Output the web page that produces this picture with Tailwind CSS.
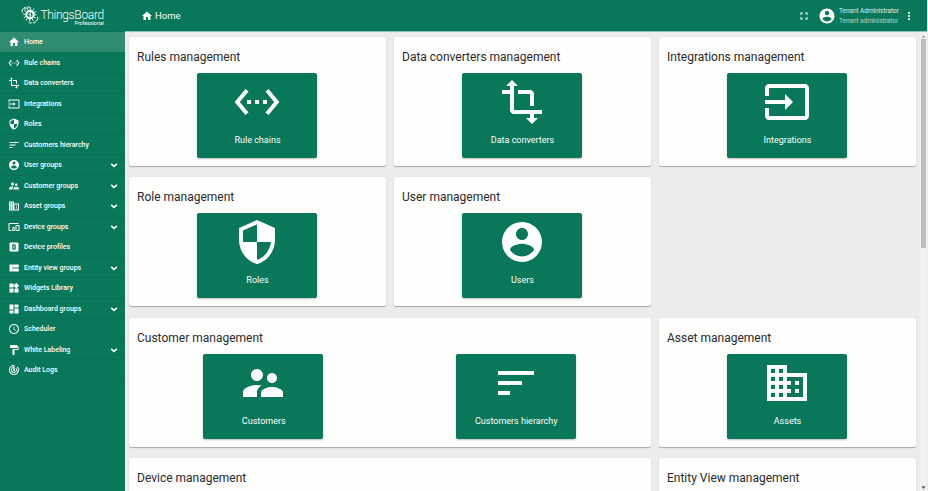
<!DOCTYPE html>
<html lang="en">
<head>
<meta charset="utf-8">
<title>ThingsBoard | Home</title>
<script src="https://cdn.jsdelivr.net/npm/@tailwindcss/browser@4"></script>
</head>
<body class="h-[491px] w-[928px] overflow-hidden bg-[#ececeb] font-['Roboto',sans-serif]">
<svg class="hidden">
  <symbol id="home" viewBox="0 0 24 24"><path d="M10 20v-6h4v6h5v-8h3L12 3 2 12h3v8z"/></symbol>
  <symbol id="rules" viewBox="0 0 24 24"><path d="M7.77 6.76L6.23 5.48.82 12l5.41 6.52 1.54-1.28L3.42 12l4.35-5.24zM7 13h2v-2H7v2zm10-2h-2v2h2v-2zm-6 2h2v-2h-2v2zm6.77-7.52l-1.54 1.28L20.58 12l-4.35 5.24 1.54 1.28L23.18 12l-5.41-6.52z"/></symbol>
  <symbol id="transform" viewBox="0 0 24 24"><path d="M22 18v-2H8V4h2L7 1 4 4h2v2H2v2h4v8c0 1.1.9 2 2 2h8v2h-2l3 3 3-3h-2v-2h4zM10 8h6v6h2V8c0-1.1-.9-2-2-2h-6v2z"/></symbol>
  <symbol id="input" viewBox="0 0 24 24"><path d="M21 3.01H3c-1.1 0-2 .9-2 2V9h2V4.99h18v14.03H3V15H1v4.01c0 1.1.9 1.98 2 1.98h18c1.1 0 2-.88 2-1.98v-14c0-1.11-.9-2-2-2zM11 16l4-4-4-4v3H1v2h10v3z"/></symbol>
  <symbol id="security" viewBox="0 0 24 24"><path d="M12 1L3 5v6c0 5.55 3.84 10.74 9 12 5.16-1.26 9-6.45 9-12V5l-9-4zm0 10.99h7c-.53 4.12-3.28 7.79-7 8.94V12H5V6.3l7-3.11v8.8z"/></symbol>
  <symbol id="account" viewBox="0 0 24 24"><path d="M12 2C6.48 2 2 6.48 2 12s4.48 10 10 10 10-4.48 10-10S17.52 2 12 2zm0 3c1.66 0 3 1.34 3 3s-1.34 3-3 3-3-1.34-3-3 1.34-3 3-3zm0 14.2c-2.5 0-4.71-1.28-6-3.22.03-1.99 4-3.08 6-3.08 1.99 0 5.97 1.09 6 3.08-1.29 1.94-3.5 3.22-6 3.22z"/></symbol>
  <symbol id="people" viewBox="0 0 24 24"><path d="M16.5 12c1.38 0 2.49-1.12 2.49-2.5S17.88 7 16.5 7C15.12 7 14 8.12 14 9.5s1.12 2.5 2.5 2.5zM9 11c1.66 0 2.99-1.34 2.99-3S10.66 5 9 5C7.34 5 6 6.34 6 8s1.34 3 3 3zm7.5 3c-1.83 0-5.5.92-5.5 2.75V19h11v-2.25c0-1.83-3.67-2.75-5.5-2.75zM9 13c-2.33 0-7 1.17-7 3.5V19h7v-2.25c0-.85.33-2.34 2.37-3.47C10.5 13.1 9.66 13 9 13z"/></symbol>
  <symbol id="sort" viewBox="0 0 24 24"><path d="M3 18h6v-2H3v2zM3 6v2h18V6H3zm0 7h12v-2H3v2z"/></symbol>
  <symbol id="domain" viewBox="0 0 24 24"><path d="M12 7V3H2v18h20V7H12zM6 19H4v-2h2v2zm0-4H4v-2h2v2zm0-4H4V9h2v2zm0-4H4V5h2v2zm4 12H8v-2h2v2zm0-4H8v-2h2v2zm0-4H8V9h2v2zm0-4H8V5h2v2zm10 12h-8v-2h2v-2h-2v-2h2v-2h-2V9h8v10zm-2-8h-2v2h2v-2zm0 4h-2v2h2v-2z"/></symbol>
  <symbol id="devices" viewBox="0 0 24 24"><path d="M3 6h18V4H3c-1.1 0-2 .9-2 2v12c0 1.1.9 2 2 2h4v-2H3V6zm10 6H9v1.78c-.61.55-1 1.33-1 2.22s.39 1.67 1 2.22V20h4v-1.78c.61-.55 1-1.34 1-2.22s-.39-1.67-1-2.22V12zm-2 5.5c-.83 0-1.5-.67-1.5-1.5s.67-1.5 1.5-1.5 1.5.67 1.5 1.5-.67 1.5-1.5 1.5zM22 8h-6c-.5 0-1 .5-1 1v10c0 .5.5 1 1 1h6c.5 0 1-.5 1-1V9c0-.5-.5-1-1-1zm-1 10h-4v-8h4v8z"/></symbol>
  <symbol id="profile" viewBox="0 0 24 24"><path fill-rule="evenodd" d="M5 3h14a2 2 0 0 1 2 2v14a2 2 0 0 1-2 2H5a2 2 0 0 1-2-2V5a2 2 0 0 1 2-2zM8.500 6.500v11h4.500a2.500 2.500 0 0 0 2.500-2.500V9a2.500 2.500 0 0 0-2.500-2.500zM11 9h2v6h-2z"/></symbol>
  <symbol id="quilt" viewBox="0 0 24 24"><path d="M3 5h6.500v14H3zM10 5h11.500v6H10zM10 13h11.500v6H10z"/></symbol>
  <symbol id="widgets" viewBox="0 0 24 24"><path d="M13 13v8h8v-8h-8zM3 21h8v-8H3v8zM3 3v8h8V3H3zm13.66-1.31L11 7.34 16.66 13l5.66-5.66-5.66-5.65z"/></symbol>
  <symbol id="dashboard" viewBox="0 0 24 24"><path d="M3 13h8V3H3v10zm0 8h8v-6H3v6zm10 0h8V11h-8v10zm0-18v6h8V3h-8z"/></symbol>
  <symbol id="schedule" viewBox="0 0 24 24"><path d="M11.99 2C6.47 2 2 6.48 2 12s4.47 10 9.99 10C17.52 22 22 17.52 22 12S17.52 2 11.99 2zM12 20c-4.42 0-8-3.58-8-8s3.58-8 8-8 8 3.58 8 8-3.58 8-8 8zm.5-13H11v6l5.25 3.15.75-1.23-4.5-2.67z"/></symbol>
  <symbol id="paint" viewBox="0 0 24 24"><path d="M18 4V3c0-.55-.45-1-1-1H5c-.55 0-1 .45-1 1v4c0 .55.45 1 1 1h12c.55 0 1-.45 1-1V6h1v4H9v11c0 .55.45 1 1 1h2c.55 0 1-.45 1-1v-9h8V4h-3z"/></symbol>
  <symbol id="audit" viewBox="0 0 24 24"><path d="M19.07 4.93l-1.41 1.41C19.1 7.79 20 9.79 20 12c0 4.42-3.58 8-8 8s-8-3.58-8-8c0-4.08 3.05-7.44 7-7.93v2.02C8.16 6.57 6 9.03 6 12c0 3.31 2.69 6 6 6s6-2.69 6-6c0-1.66-.67-3.16-1.76-4.24l-1.41 1.41C15.55 9.9 16 10.9 16 12c0 2.21-1.79 4-4 4s-4-1.79-4-4c0-1.86 1.28-3.41 3-3.86v2.14c-.6.35-1 .98-1 1.72 0 1.1.9 2 2 2s2-.9 2-2c0-.74-.4-1.38-1-1.72V2h-1C6.48 2 2 6.48 2 12s4.48 10 10 10 10-4.48 10-10c0-2.76-1.12-5.26-2.93-7.07z"/></symbol>
</svg>

<div class="flex h-full w-[927px]">
  <aside class="flex w-[125px] shrink-0 flex-col bg-[#08775a] text-white">
    <div class="flex h-8 shrink-0 items-start border-b border-[#076f53] pl-[21px]">
      <svg class="mt-[5px] h-5 w-[18px] shrink-0" viewBox="0 0 18 20" fill="none" stroke="#fff" stroke-linecap="round">
        <circle cx="9" cy="9.6" r="3.7" stroke-width="2.2"/>
        <path d="M9.6 7.4 8 9.8h2l-1.5 2.4" stroke-width="1"/>
        <path d="M4.6 6.3 3.2 5M6.8 4.8 6.4 3.4M9.4 4.4V3M12 5.2l.9-1.3M13.4 7.3l1.5-.6M13.7 9.8h1.6M13.2 12.2l1.3.8M11.3 14l.7 1.4M8.6 14.7v1.4M6 13.9l-.9 1.3M4.5 11.9l-1.4.7M4 9.2H2.5" stroke-width=".9"/>
        <path d="M1.2 7.2C.8 5.600 1.200 4 2.300 3.600M3.500 2.400a1 1 0 1 0 1.500-.3M6.500 2c1.200-.3 2.300 0 3 .8M16.800 12.300c.3 1.600-.1 3.200-1.600 3.300M14.200 16.600c.3 1.200-.8 1.800-1.800 1.300M10.800 17.800c-1 .5-2 .2-2.800-.2" stroke-width="1"/>
      </svg>
      <div class="flex w-[65px] flex-col items-end pt-[9px]">
        <span class="text-[12px] leading-[12px] font-light tracking-[-0.3px] whitespace-nowrap">ThingsBoard</span>
        <span class="text-[5.3px] leading-[5px] whitespace-nowrap">Professional</span>
      </div>
    </div>
    <nav id="menu" class="flex flex-col"></nav>
  </aside>

  <div class="flex min-w-0 flex-1 flex-col">
    <header class="flex h-8 shrink-0 items-center border-b border-[#8fc0b1] bg-[#08775a] pl-4 text-white">
      <svg class="h-3 w-3 fill-current"><use href="#home"/></svg>
      <span class="ml-[2px] pt-px text-[9.5px] leading-3">Home</span>
      <svg class="ml-auto h-3 w-3 fill-current" viewBox="0 0 24 24"><path d="M7 14H5v5h5v-2H7v-3zm-2-4h2V7h3V5H5v5zm12 7h-3v2h5v-5h-2v3zM14 5v2h3v3h2V5h-5z"/></svg>
      <svg class="ml-2 h-[18px] w-[18px] fill-current"><use href="#account"/></svg>
      <div class="ml-[3.5px] flex w-[64px] flex-col text-[6.4px] leading-[10px] whitespace-nowrap">
        <span class="text-white/85">Tenant Administrator</span>
        <span class="text-white/65">Tenant administrator</span>
      </div>
      <svg class="mr-3 h-3 w-3 fill-current" viewBox="0 0 24 24"><path d="M12 8c1.100 0 2-.9 2-2s-.9-2-2-2-2 .9-2 2 .9 2 2 2zm0 2c-1.100 0-2 .9-2 2s.9 2 2 2 2-.9 2-2-.9-2-2-2zm0 6c-1.100 0-2 .9-2 2s.9 2 2 2 2-.9 2-2-.9-2-2-2z"/></svg>
    </header>
    <div class="flex min-h-0 flex-1">
      <main id="cards" class="grid flex-1 auto-rows-[129px] grid-cols-3 gap-x-2 gap-y-[11.4px] overflow-hidden pt-[5px] pr-1 pl-1"></main>
      <div class="flex w-[7px] flex-col items-center bg-[#f1f1f0] pt-[2px] pb-[1px]">
        <svg class="h-[5px] w-[5px] fill-[#a0a0a0]" viewBox="0 0 5 5"><path d="M.7 3.700 2.500 1l1.800 2.700z"/></svg>
        <div class="h-[209px] w-[5px] bg-[#bdbdbd]"></div>
        <svg class="mt-auto h-[5px] w-[5px] fill-[#505050]" viewBox="0 0 5 5"><path d="M.5 1.300h4L2.500 4z"/></svg>
      </div>
    </div>
  </div>
</div>

<script>
const menu = [
  ['home', 'Home'], ['rules', 'Rule chains'], ['transform', 'Data converters'], ['input', 'Integrations'],
  ['security', 'Roles'], ['sort', 'Customers hierarchy'], ['account', 'User groups', 1], ['people', 'Customer groups', 1],
  ['domain', 'Asset groups', 1], ['devices', 'Device groups', 1], ['profile', 'Device profiles'],
  ['quilt', 'Entity view groups', 1], ['widgets', 'Widgets Library'], ['dashboard', 'Dashboard groups', 1],
  ['schedule', 'Scheduler'], ['paint', 'White Labeling', 1], ['audit', 'Audit Logs']
];
document.getElementById('menu').innerHTML = menu.map(([icon, label, open], i) => `
  <a class="flex h-[20.5px] items-center border-b border-[#076f53] pt-[0.6px] pl-2 pr-[7px] ${i ? '' : 'bg-[#2f8b72]'}">
    <svg class="h-3 w-3 fill-current"><use href="#${icon}"/></svg>
    <span class="ml-1 text-[7px] leading-[10px] font-medium whitespace-nowrap">${label}</span>
    ${open ? '<svg class="ml-auto h-2 w-2" viewBox="0 0 8 8" fill="none" stroke="#fff" stroke-width="1.6"><path d="M1.200 2.800 4 5.500l2.800-2.700"/></svg>' : ''}
  </a>`).join('');

const cards = [
  ['Rules management', '', [['rules', 'Rule chains']]],
  ['Data converters management', '', [['transform', 'Data converters']]],
  ['Integrations management', '', [['input', 'Integrations']]],
  ['Role management', '', [['security', 'Roles']]],
  ['User management', '', [['account', 'Users']]],
  ['Customer management', 'col-span-2 col-start-1', [['people', 'Customers'], ['sort', 'Customers hierarchy']]],
  ['Asset management', '', [['domain', 'Assets']]],
  ['Device management', 'col-span-2', []],
  ['Entity View management', '', []]
];
document.getElementById('cards').innerHTML = cards.map(([title, span, tiles]) => `
  <section class="flex flex-col rounded-[2px] bg-[#fefefd] px-2 pt-3 shadow-[0_1px_1px_rgba(0,0,0,0.28),0_0_1px_rgba(0,0,0,0.12)] ${span}">
    <h2 class="text-[12px] leading-4 whitespace-nowrap text-[#2b2b2b]">${title}</h2>
    <div class="mt-2 mr-px flex">
      ${tiles.map(([icon, label]) => `
        <div class="flex flex-1 justify-center">
          <a class="flex h-[85px] w-[120px] flex-col items-center rounded-[2px] bg-[#08775a] pt-[5px] text-white shadow-[0_1px_2px_rgba(0,0,0,0.25)]">
            <svg class="h-12 w-12 fill-current"><use href="#${icon}"/></svg>
            <span class="mt-2 ml-px text-[9px] leading-3 whitespace-nowrap">${label}</span>
          </a>
        </div>`).join('')}
    </div>
  </section>`).join('');
</script>
</body>
</html>
